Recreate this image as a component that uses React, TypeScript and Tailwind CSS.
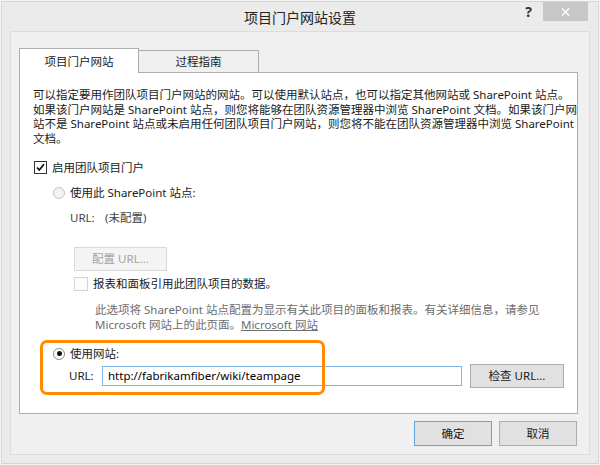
export default function App() {
  return (
    <div className="w-[600px] h-[465px] bg-[#f5f5f5] p-px font-['Noto_Sans','Noto_Sans_CJK_SC',sans-serif] text-[11.5px] text-[#1a1a1a]">
      <div className="h-full border border-[#d5d5d5] bg-[#ebebeb] flex flex-col">
        {/* title bar */}
        <div className="h-[29px] grid grid-cols-[1fr_auto_1fr]">
          <div />
          <div className="text-[14px] text-[#222] leading-[29px] pt-px">项目门户网站设置</div>
          <div className="flex justify-end items-start pr-[10px]">
            <span className="mt-[3px] mr-[11px] text-[14px] font-bold leading-[14px] text-[#333]">?</span>
            <div className="w-[45px] h-[19px] bg-[#c7c7c7] flex items-center justify-center">
              <svg width="9" height="8" viewBox="0 0 9 8">
                <path d="M1 0.5 L8 7.5 M8 0.5 L1 7.5" stroke="#ffffff" strokeWidth="1.4" fill="none" />
              </svg>
            </div>
          </div>
        </div>

        {/* group panel */}
        <div className="mx-[8px] w-[580px] h-[424px] border border-[#dcdcdc] bg-[#f0f0f0] pt-[16px] pl-[8px]">
          {/* tabs */}
          <div className="relative z-10 flex items-end h-[24px]">
            <div className="w-[120px] h-[25px] -mb-px bg-white border border-b-0 border-[#adadad] flex items-center justify-center pt-[2px]">
              项目门户网站
            </div>
            <div className="w-[121px] -ml-px h-[22px] bg-[#f0f0f0] border border-b-0 border-[#adadad] flex items-center justify-center">
              过程指南
            </div>
          </div>

          {/* tab content */}
          <div className="relative w-[559px] h-[342px] border border-[#adadad] bg-white flex flex-col">
            <p className="mt-[15px] ml-[13px] leading-[14.7px] whitespace-nowrap">
              可以指定要用作团队项目门户网站的网站。可以使用默认站点，也可以指定其他网站或 SharePoint 站点。
              <br />
              如果该门户网站是 SharePoint 站点，则您将能够在团队资源管理器中浏览 SharePoint 文档。如果该门户网
              <br />
              站不是 SharePoint 站点或未启用任何团队项目门户网站，则您将不能在团队资源管理器中浏览 SharePoint
              <br />
              文档。
            </p>

            <div className="mt-[14px] ml-[14px] h-[14px] flex items-center">
              <div className="w-[13px] h-[13px] border border-[#333] bg-white flex items-center justify-center">
                <svg width="11" height="11" viewBox="0 0 11 11">
                  <path d="M2 5.5 L4.3 8 L9 2.3" stroke="#111" strokeWidth="1.8" fill="none" />
                </svg>
              </div>
              <span className="ml-[5px] leading-[14px]">启用团队项目门户</span>
            </div>

            <div className="mt-[11px] ml-[33px] h-[14px] flex items-center">
              <div className="w-[12px] h-[12px] rounded-full border border-[#c4c4c4] bg-[#f3f3f3]" />
              <span className="ml-[5px] leading-[14px]">使用此 SharePoint 站点:</span>
            </div>

            <div className="mt-[11px] ml-[50px] h-[14px] flex items-center text-[#444]">
              <span className="w-[35px] leading-[14px]">URL:</span>
              <span className="leading-[14px]">(未配置)</span>
            </div>

            <div className="mt-[22px] ml-[54px] w-[93px] h-[24px] border border-[#d9d9d9] bg-[#f4f4f4] text-[#a3a3a3] flex items-center justify-center">
              配置 URL...
            </div>

            <div className="mt-[6px] ml-[54px] h-[15px] flex items-center">
              <div className="w-[14px] h-[14px] border border-[#d4d4d4] bg-[#fcfcfc]" />
              <span className="ml-[5px] leading-[14px]">报表和面板引用此团队项目的数据。</span>
            </div>

            <p className="mt-[10px] ml-[75px] leading-[15px] text-[#6d6d6d] whitespace-nowrap">
              此选项将 SharePoint 站点配置为显示有关此项目的面板和报表。有关详细信息，请参见
              <br />
              Microsoft 网站上的此页面。<span className="underline">Microsoft 网站</span>
            </p>

            <div className="mt-[15px] ml-[33px] h-[14px] flex items-center">
              <div className="w-[12px] h-[12px] rounded-full border border-[#8d8d8d] bg-white flex items-center justify-center">
                <div className="w-[5px] h-[5px] rounded-full bg-[#111]" />
              </div>
              <span className="ml-[5px] leading-[14px]">使用网站:</span>
            </div>

            <div className="mt-[3px] ml-[49px] h-[24px] flex items-center">
              <span className="w-[33px] leading-[14px]">URL:</span>
              <div className="w-[360px] h-[20px] border border-[#7eb4ea] bg-white pl-[5px] flex items-center text-black">
                http://fabrikamfiber/wiki/teampage
              </div>
              <div className="ml-[8px] w-[94px] h-[24px] border border-[#adadad] bg-[#e1e1e1] flex items-center justify-center">
                检查 URL...
              </div>
            </div>

            <div className="absolute left-[20px] top-[267px] w-[285px] h-[55px] border-[3px] border-[#ff8c00] rounded-[7px] pointer-events-none" />
          </div>

          {/* dialog buttons */}
          <div className="mt-[7px] w-[559px] pr-px flex justify-end gap-[7px]">
            <div className="w-[78px] h-[25px] border border-[#5ea5e5] bg-[#e1e1e1] flex items-center justify-center">
              确定
            </div>
            <div className="w-[78px] h-[25px] border border-[#adadad] bg-[#e1e1e1] flex items-center justify-center">
              取消
            </div>
          </div>
        </div>
      </div>
    </div>
  );
}
